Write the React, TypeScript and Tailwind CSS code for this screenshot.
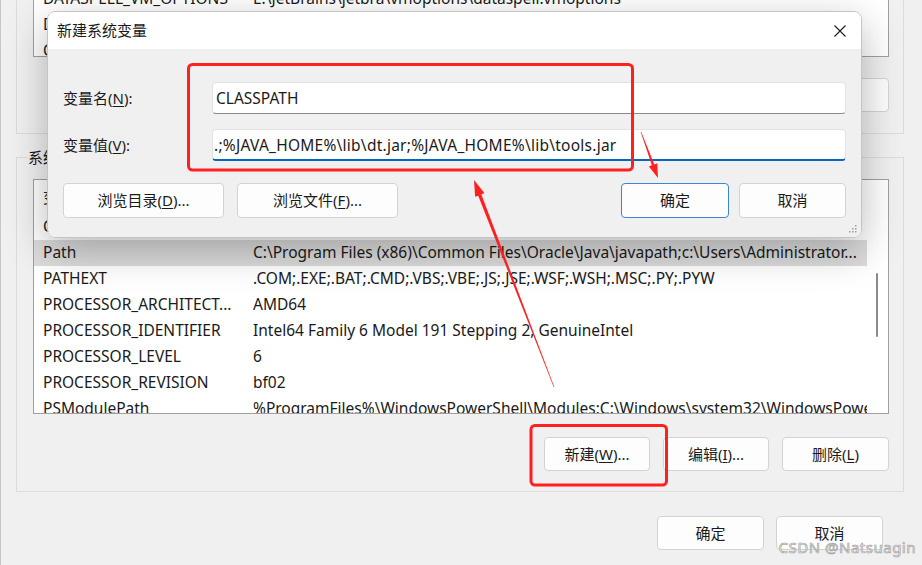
import React from 'react';

const userVars = [
  { name: 'DATASPELL_VM_OPTIONS', value: 'E:\\JetBrains\\jetbra\\vmoptions\\dataspell.vmoptions' },
  { name: 'DataSpell', value: 'E:\\DataSpell 2023.1\\bin;' },
  { name: 'ChocolateyLastPathUpdate', value: '133387526468125630' },
];

const sysVars = [
  { name: 'ComSpec', value: 'C:\\Windows\\system32\\cmd.exe', selected: false },
  { name: 'Path', value: 'C:\\Program Files (x86)\\Common Files\\Oracle\\Java\\javapath;c:\\Users\\Administrator...', selected: true },
  { name: 'PATHEXT', value: '.COM;.EXE;.BAT;.CMD;.VBS;.VBE;.JS;.JSE;.WSF;.WSH;.MSC;.PY;.PYW', selected: false },
  { name: 'PROCESSOR_ARCHITECT...', value: 'AMD64', selected: false },
  { name: 'PROCESSOR_IDENTIFIER', value: 'Intel64 Family 6 Model 191 Stepping 2, GenuineIntel', selected: false },
  { name: 'PROCESSOR_LEVEL', value: '6', selected: false },
  { name: 'PROCESSOR_REVISION', value: 'bf02', selected: false },
  { name: 'PSModulePath', value: '%ProgramFiles%\\WindowsPowerShell\\Modules;C:\\Windows\\system32\\WindowsPowerShell\\v1.0\\Modules', selected: false },
];

const Btn = ({ children, className = '' }: { children: React.ReactNode; className?: string }) => (
  <button
    className={`flex items-center justify-center rounded-[4px] border bg-[#fdfdfd] text-[15px] text-[#1b1b1b] ${className}`}
  >
    {children}
  </button>
);

const Key = ({ k }: { k: string }) => <span className="underline underline-offset-2">{k}</span>;

const App = () => {
  return (
    <div className="relative h-[565px] w-[922px] overflow-hidden border-l border-[#c6c6c6] bg-[#f0f0f0] font-['Noto_Sans','Noto_Sans_CJK_SC',sans-serif] text-[15.5px] text-[#1a1a1a]">
      {/* environment variables window behind */}
      <div className="pl-[15px] pr-[18px]">
        <div className="mt-[-30px] border border-[#dcdcdc] pb-[21px] pl-[16px] pr-[14px] pt-[13px]">
          <div className="h-[73px] overflow-hidden border border-[#a0a0a0] bg-white pt-[1px]">
            {userVars.map((v) => (
              <div key={v.name} className="flex h-[26px] items-center whitespace-nowrap pl-[9px]">
                <span className="w-[210px] shrink-0">{v.name}</span>
                <span>{v.value}</span>
              </div>
            ))}
          </div>
          <div className="mt-[21px] flex justify-end gap-[13px]">
            <Btn className="h-[34px] w-[106px] border-[#d3d3d3]">新建(<Key k="N" />)...</Btn>
            <Btn className="h-[34px] w-[106px] border-[#d3d3d3]">编辑(<Key k="E" />)...</Btn>
            <Btn className="h-[34px] w-[107px] border-[#d3d3d3]">删除(<Key k="D" />)</Btn>
          </div>
        </div>

        <fieldset className="mt-[13px] min-w-0 border border-[#dcdcdc] pb-[20px] pl-[16px] pr-[14px]">
          <legend className="ml-[-6px] px-[1px] text-[15px] leading-[20px]">
            系统变量(<Key k="S" />)
          </legend>
          <div className="mt-[12px] flex h-[235px] overflow-hidden border border-[#a0a0a0] bg-white">
            <div className="min-w-0 flex-1 overflow-hidden">
              <div className="flex h-[34px] items-center pl-[9px]">
                <span className="w-[210px] shrink-0 text-[15px]">变量</span>
                <span className="text-[15px]">值</span>
              </div>
              {sysVars.map((v) => (
                <div
                  key={v.name}
                  className={`flex h-[26px] items-center whitespace-nowrap pl-[9px] ${v.selected ? 'bg-[#dcdcdc]' : ''}`}
                >
                  <span className="w-[210px] shrink-0">{v.name}</span>
                  <span className="overflow-hidden">{v.value}</span>
                </div>
              ))}
            </div>
            <div className="w-[21px] shrink-0">
              <div className="ml-[9px] mt-[93px] h-[64px] w-[2px] rounded-full bg-[#8a8a8a]" />
            </div>
          </div>
          <div className="mt-[23px] flex justify-end gap-[13px]">
            <Btn className="h-[34px] w-[106px] border-[#d3d3d3]">新建(<Key k="W" />)...</Btn>
            <Btn className="h-[34px] w-[106px] border-[#d3d3d3]">编辑(<Key k="I" />)...</Btn>
            <Btn className="h-[34px] w-[107px] border-[#d3d3d3]">删除(<Key k="L" />)</Btn>
          </div>
        </fieldset>

        <div className="mt-[24px] flex justify-end gap-[12px] pr-[21px]">
          <Btn className="h-[34px] w-[107px] border-[#d3d3d3]">确定</Btn>
          <Btn className="h-[34px] w-[107px] border-[#d3d3d3]">取消</Btn>
        </div>
      </div>

      {/* new system variable dialog */}
      <div className="absolute left-[46px] top-[11px] w-[815px] overflow-hidden rounded-[8px] border border-[#c4c4c4] shadow-[0_12px_40px_rgba(0,0,0,0.28)]">
        <div className="flex h-[37px] items-center justify-between bg-white pl-[9px] pr-[15px]">
          <span className="text-[15px]">新建系统变量</span>
          <svg width="12" height="12" viewBox="0 0 12 12" className="text-[#1a1a1a]">
            <path d="M0.5 0.5 L11.5 11.5 M11.5 0.5 L0.5 11.5" stroke="currentColor" strokeWidth="1.1" fill="none" />
          </svg>
        </div>
        <div className="relative bg-[#f0f0f0] pb-[19px] pl-[15px] pr-[15px] pt-[33px]">
          <div className="flex items-center">
            <label className="w-[149px] shrink-0 text-[15px]">
              变量名(<Key k="N" />):
            </label>
            <input
              readOnly
              value="CLASSPATH"
              className="h-[32px] flex-1 rounded-[4px] border border-[#e2e2e2] border-b-[#8a8a8a] bg-white pl-[3px] text-[15.5px] text-[#1a1a1a] outline-none"
            />
          </div>
          <div className="mt-[15px] flex items-center">
            <label className="w-[149px] shrink-0 text-[15px]">
              变量值(<Key k="V" />):
            </label>
            <input
              readOnly
              value=".;%JAVA_HOME%\lib\dt.jar;%JAVA_HOME%\lib\tools.jar"
              className="h-[32px] flex-1 rounded-[4px] border border-[#e2e2e2] border-b-2 border-b-[#0067c0] bg-white pl-[1px] text-[15.5px] tracking-[0.25px] text-[#1a1a1a] outline-none"
            />
          </div>
          <div className="mt-[22px] flex items-center">
            <Btn className="h-[35px] w-[161px] border-[#d3d3d3]">浏览目录(<Key k="D" />)...</Btn>
            <Btn className="ml-[13px] h-[35px] w-[161px] border-[#d3d3d3]">浏览文件(<Key k="F" />)...</Btn>
            <Btn className="ml-auto h-[35px] w-[108px] border-[#3c85cf]">确定</Btn>
            <Btn className="ml-[10px] h-[35px] w-[107px] border-[#d3d3d3]">取消</Btn>
          </div>
          <svg width="8" height="8" viewBox="0 0 8 8" className="absolute bottom-[4px] right-[4px] text-[#9a9a9a]">
            <rect x="6" y="0" width="1.5" height="1.5" fill="currentColor" />
            <rect x="3" y="3" width="1.5" height="1.5" fill="currentColor" />
            <rect x="6" y="3" width="1.5" height="1.5" fill="currentColor" />
            <rect x="0" y="6" width="1.5" height="1.5" fill="currentColor" />
            <rect x="3" y="6" width="1.5" height="1.5" fill="currentColor" />
            <rect x="6" y="6" width="1.5" height="1.5" fill="currentColor" />
          </svg>
        </div>
      </div>

      {/* red annotations */}
      <svg className="pointer-events-none absolute inset-0" width="922" height="565" viewBox="0 0 922 565">
        <rect x="187.5" y="64.5" width="444" height="105.5" rx="4" fill="none" stroke="#ff2020" strokeWidth="3" />
        <rect x="530" y="425.5" width="135.5" height="59.5" rx="4" fill="none" stroke="#ff2020" strokeWidth="3" />
        <polygon
          points="657,178 656.3,163.3 653.3,164.4 640.3,131.9 639.7,132.1 650.9,165.3 647.9,166.5"
          fill="#ff2020"
        />
        <polygon
          points="473,180 483.4,193.1 480.4,194.6 553.3,386.9 552.7,387.1 477.2,195.8 474.1,196.7"
          fill="#ff2020"
        />
      </svg>

      <span className="absolute bottom-[7px] right-[6px] text-[15px] tracking-[0.5px] text-[#f4f4f4] [-webkit-text-stroke:0.7px_#a4a4a4]">
        CSDN @Natsuagin
      </span>
    </div>
  );
};

export default App;
